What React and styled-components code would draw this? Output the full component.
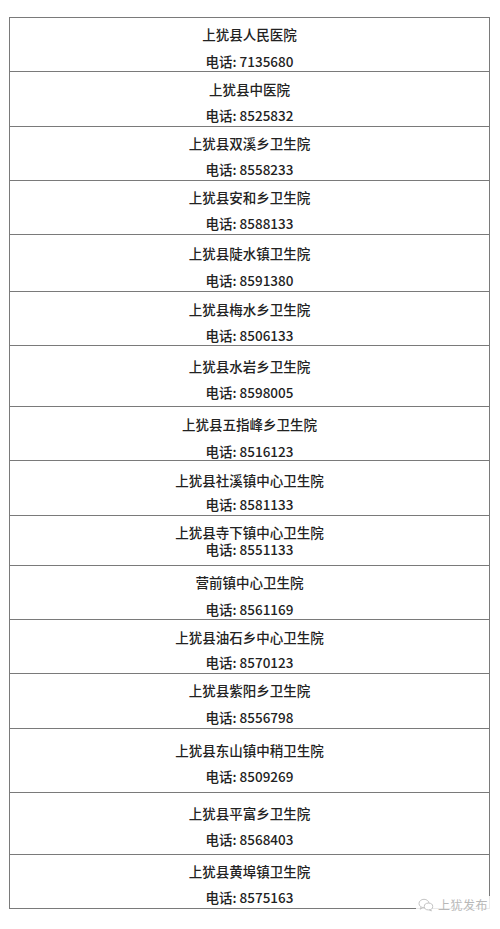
import React from "react";
import styled, { createGlobalStyle } from "styled-components";

const GlobalStyle = createGlobalStyle`
  html, body {
    margin: 0;
    padding: 0;
    background: #fff;
  }
  body {
    font-family: "Noto Sans CJK SC", "Noto Sans", sans-serif;
    color: #222;
  }
`;

const Page = styled.div`
  position: relative;
  width: 500px;
  height: 929px;
  padding-top: 17px;
  box-sizing: border-box;
`;

const Table = styled.div`
  margin-left: 9px;
  width: 481px;
  box-sizing: border-box;
  border: 1px solid #7a7a7a;
  border-bottom: none;
`;

const Row = styled.div`
  display: flex;
  flex-direction: column;
  align-items: center;
  box-sizing: border-box;
  height: ${(p) => p.$h}px;
  padding-top: ${(p) => p.$pt}px;
  border-bottom: 1px solid #7a7a7a;
`;

const Line = styled.div`
  font-size: 13.5px;
  font-weight: 500;
  line-height: 16px;
  height: 16px;
  white-space: nowrap;
`;

const Phone = styled(Line)`
  margin-top: ${(p) => p.$gap}px;
`;

const Mark = styled.div`
  position: absolute;
  right: 10px;
  top: 896px;
  display: flex;
  align-items: center;
  gap: 4px;
  padding: 0 2px;
  background: rgba(255, 255, 255, 0.85);
  color: #b8b8b8;
  font-size: 12px;
  line-height: 18px;
  letter-spacing: 0.5px;
`;

// name, phone, row height, name centre, phone centre (from the row's top line)
const rows = [
  ["上犹县人民医院", "7135680", 54, 17, 44],
  ["上犹县中医院", "8525832", 55, 18, 44],
  ["上犹县双溪乡卫生院", "8558233", 54, 17, 43],
  ["上犹县安和乡卫生院", "8588133", 54, 17, 43],
  ["上犹县陡水镇卫生院", "8591380", 57, 19, 46],
  ["上犹县梅水乡卫生院", "8506133", 54, 18, 44],
  ["上犹县水岩乡卫生院", "8598005", 61, 21, 47],
  ["上犹县五指峰乡卫生院", "8516123", 54, 18, 45],
  ["上犹县社溪镇中心卫生院", "8581133", 55, 20, 44],
  ["上犹县寺下镇中心卫生院", "8551133", 50, 17, 34],
  ["营前镇中心卫生院", "8561169", 54, 17, 44],
  ["上犹县油石乡中心卫生院", "8570123", 54, 18, 43],
  ["上犹县紫阳乡卫生院", "8556798", 55, 17, 44],
  ["上犹县东山镇中稍卫生院", "8509269", 64, 22, 48],
  ["上犹县平富乡卫生院", "8568403", 62, 21, 47],
  ["上犹县黄埠镇卫生院", "8575163", 54, 17, 43],
];

const WeChatIcon = () => (
  <svg width="16" height="14" viewBox="0 0 16 14" fill="none" stroke="#c4c4c4" strokeWidth="1">
    <ellipse cx="6" cy="5.5" rx="5" ry="4.2" />
    <path d="M3 9 L2.2 11.2 L4.8 9.6" />
    <ellipse cx="10.5" cy="8.5" rx="4.2" ry="3.4" fill="#fff" />
    <path d="M12.5 11.6 L13.4 13 L11.2 11.9" />
  </svg>
);

const App = () => (
  <Page>
    <GlobalStyle />
    <Table>
      {rows.map(([name, phone, h, ny, py]) => (
        <Row key={name} $h={h} $pt={ny - 9.5}>
          <Line>{name}</Line>
          <Phone $gap={py - ny - 16}>电话: {phone}</Phone>
        </Row>
      ))}
    </Table>
    <Mark>
      <WeChatIcon />
      上犹发布
    </Mark>
  </Page>
);

export default App;
